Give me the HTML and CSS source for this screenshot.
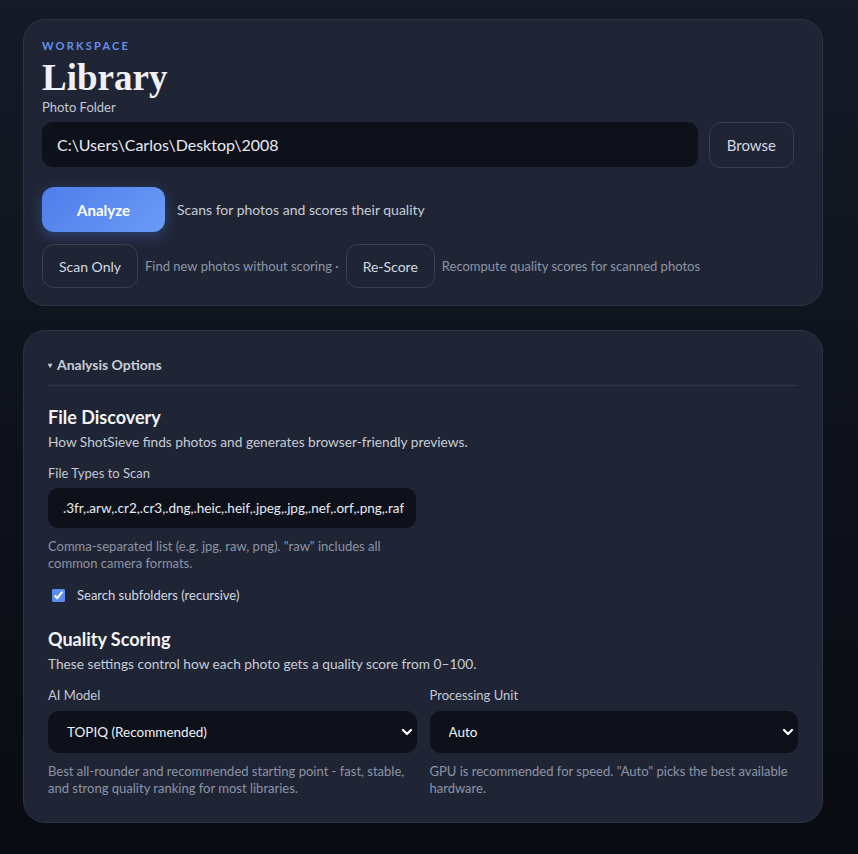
FILE: index.html
```html
<!DOCTYPE html>
<html lang="en">
 <head>
  <title>ShotSieve - Library</title>
  <meta charset="utf-8"/>
  <link rel="stylesheet" href="styles.css">
 </head>
 <body>
	<div id="wrap">
		<section class="card libCard">
			<p class="eyebrow">WORKSPACE</p>
			<h1>Library</h1>
			<label class="fieldLabel" for="folder">Photo Folder</label>
			<div class="folderRow">
				<input id="folder" class="textInput big" type="text" value="C:\Users\Carlos\Desktop\2008"/>
				<button class="btn ghost" type="button">Browse</button>
			</div>
			<div class="actionRow">
				<button class="btn primary" type="button">Analyze</button>
				<span class="hint">Scans for photos and scores their quality</span>
			</div>
			<div class="actionRow small">
				<button class="btn ghost sm" type="button">Scan Only</button>
				<span class="hint muted">Find new photos without scoring &middot;</span>
				<button class="btn ghost sm" type="button">Re-Score</button>
				<span class="hint muted">Recompute quality scores for scanned photos</span>
			</div>
		</section>

		<section class="card optCard">
			<details open>
				<summary><span class="caret">&#9662;</span> Analysis Options</summary>

				<div class="group">
					<h2>File Discovery</h2>
					<p class="desc">How ShotSieve finds photos and generates browser-friendly previews.</p>
					<div class="halfCol">
						<label class="fieldLabel" for="types">File Types to Scan</label>
						<input id="types" class="textInput half" type="text" value=".3fr,.arw,.cr2,.cr3,.dng,.heic,.heif,.jpeg,.jpg,.nef,.orf,.png,.raf,.rw2,.tif,.tiff"/>
						<p class="help">Comma-separated list (e.g. jpg, raw, png). "raw" includes all common camera formats.</p>
					</div>
					<label class="check"><input type="checkbox" checked/> Search subfolders (recursive)</label>
				</div>

				<div class="group">
					<h2>Quality Scoring</h2>
					<p class="desc">These settings control how each photo gets a quality score from 0&ndash;100.</p>
					<div class="cols">
						<div>
							<label class="fieldLabel" for="model">AI Model</label>
							<div class="selectBox">
								<select id="model">
									<option>TOPIQ (Recommended)</option>
									<option>MUSIQ</option>
								</select>
								<svg class="chev" width="12" height="8" viewBox="0 0 12 8"><path d="M2 2l4 4 4-4" fill="none" stroke="#fff" stroke-width="2.2" stroke-linecap="round" stroke-linejoin="round"/></svg>
							</div>
							<p class="help">Best all-rounder and recommended starting point - fast, stable, and strong quality ranking for most libraries.</p>
						</div>
						<div>
							<label class="fieldLabel" for="unit">Processing Unit</label>
							<div class="selectBox">
								<select id="unit">
									<option>Auto</option>
									<option>GPU</option>
									<option>CPU</option>
								</select>
								<svg class="chev" width="12" height="8" viewBox="0 0 12 8"><path d="M2 2l4 4 4-4" fill="none" stroke="#fff" stroke-width="2.2" stroke-linecap="round" stroke-linejoin="round"/></svg>
							</div>
							<p class="help">GPU is recommended for speed. "Auto" picks the best available hardware.</p>
						</div>
					</div>
				</div>
			</details>
		</section>
	</div>
 </body>
</html>
```

FILE: styles.css
```css
*{margin:0; padding:0; box-sizing:border-box;}
html{background:#0a0d14;}
body{min-height:854px; font-family:Lato, "Noto Sans", sans-serif; color:#e6e9f1;
background:linear-gradient(180deg, #151a27 0%, #0f131d 45%, #090b11 100%);}

#wrap{width:800px; padding:19px 0 0; margin-left:23px; display:flex; flex-direction:column; gap:24px;}

.card{background:#202535; border:1px solid #2d3344; border-radius:22px;}
.libCard{padding:19px 18px 17px;}
.optCard{padding:24px 24px 25px;}

/* header */
.eyebrow{font-size:11px; font-weight:700; letter-spacing:2.2px; color:#6490ec; line-height:14px;}
h1{font-family:"Liberation Serif", serif; font-size:37px; font-weight:700; line-height:40px; color:#eef1f7; margin-top:5px;}
.fieldLabel{display:block; font-size:13px; line-height:18px; color:#c3c8d4;}

.folderRow{display:flex; gap:11px; margin-top:6px; padding-right:10px;}
.textInput{background:#0e111a; border:none; border-radius:11px; color:#e8ebf2; font-family:inherit; outline:none;}
.textInput.big{flex:1; height:45px; padding:0 15px; font-size:16px;}

.btn{font-family:inherit; cursor:pointer; border-radius:12px; color:#d5d9e3;}
.btn.ghost{background:#202535; border:1px solid #3a4052; font-size:15px; padding:0 17px; height:46px;}
.btn.sm{font-size:14px; padding:0 16px; height:44px;}
.btn.primary{height:45px; width:123px; border:none; font-size:15px; font-weight:700; color:#fff;
background:linear-gradient(135deg, #4f7deb 0%, #6a9bf6 100%); box-shadow:0 4px 14px rgba(79,125,235,0.35);}

.actionRow{display:flex; align-items:center; gap:12px; margin-top:19px;}
.actionRow.small{gap:7px; margin-top:12px;}
.hint{font-size:14px; color:#c7ccd7;}
.hint.muted{font-size:13px; color:#8d95a7;}

/* options */
summary{list-style:none; font-size:14px; font-weight:700; color:#c9cdd8; line-height:20px; padding-bottom:10px;
border-bottom:1px solid #30364a; cursor:pointer;}
summary::-webkit-details-marker{display:none;}
.caret{font-size:8px; vertical-align:2px; margin-right:2px;}

.group{margin-top:20px;}
.group + .group{margin-top:25px;}
h2{font-size:18px; font-weight:700; line-height:22px; color:#f2f4f8;}
.desc{font-size:13.7px; color:#c7ccd7; line-height:18px; margin-top:5px; margin-bottom:13px;}

.halfCol{width:368px;}
.textInput.half{width:368px; height:40px; padding:0 12px 0 15px; font-size:13.5px; margin-top:6px;}
.help{font-size:13px; line-height:17px; color:#8c94a6; margin-top:10px; padding-right:8px;}
.check{display:flex; align-items:center; gap:12px; font-size:13px; color:#d3d7e1; margin-top:15px; padding-left:4px;}
.check input{width:13px; height:13px; accent-color:#5b8def;}

.cols{display:grid; grid-template-columns:1fr 1fr; gap:13px;}
.selectBox{position:relative; margin-top:7px;}
.selectBox select{appearance:none; -webkit-appearance:none; width:100%; height:42px; background:#0e111a; border:none; border-radius:11px;
color:#eef0f5; font-family:inherit; font-size:13.5px; padding:0 19px; outline:none;}
.chev{position:absolute; right:4px; top:17px; pointer-events:none;}
```
